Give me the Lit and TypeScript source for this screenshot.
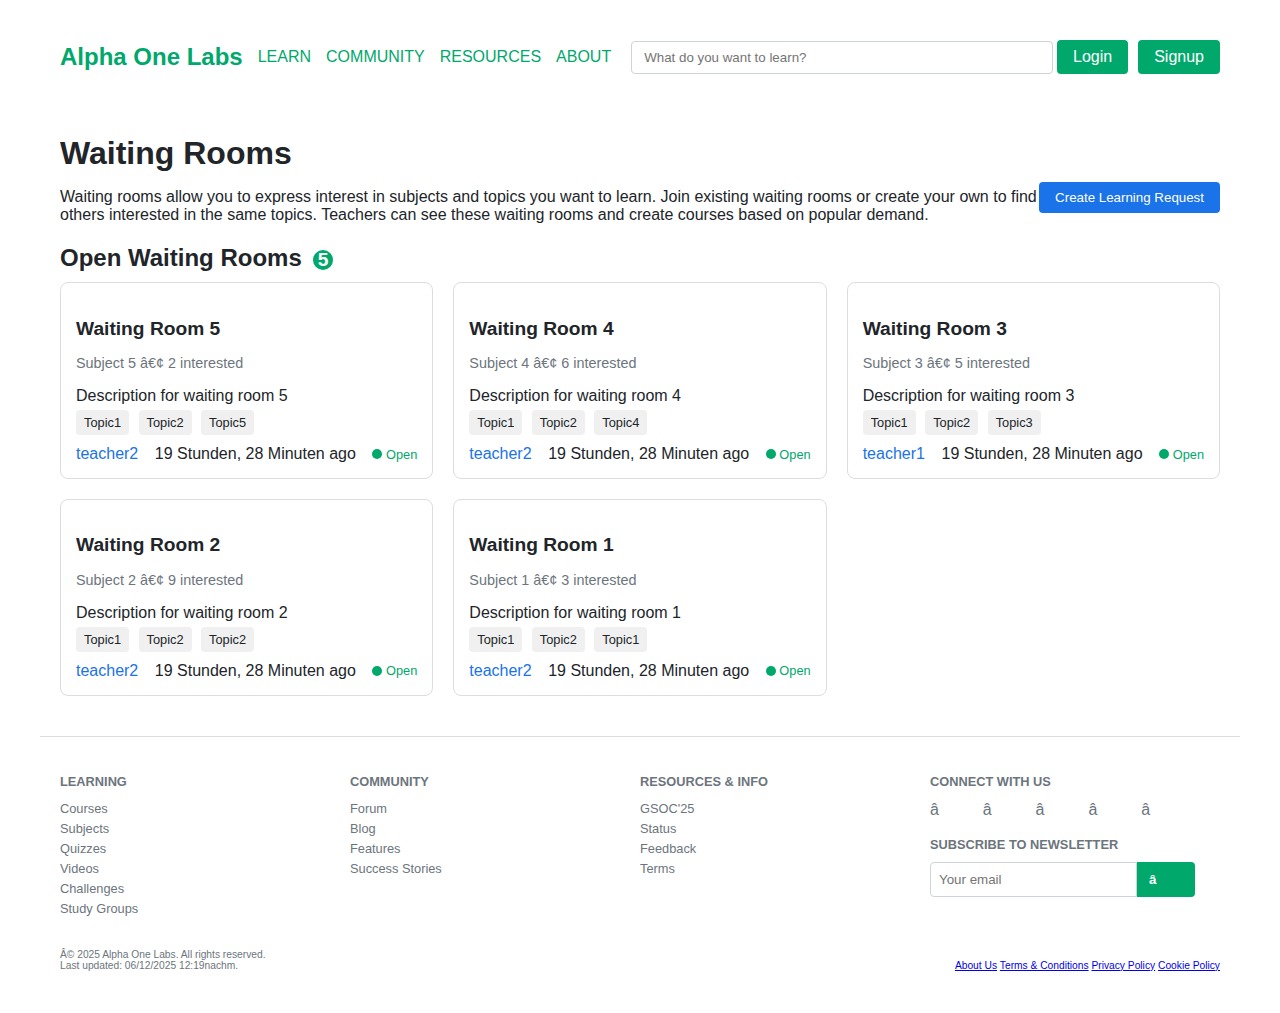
import { LitElement, html, css } from "lit";
import { customElement } from "lit/decorators.js";

const rooms = [
  { n: 5, interested: 2, topics: [1, 2, 5], teacher: "teacher2" },
  { n: 4, interested: 6, topics: [1, 2, 4], teacher: "teacher2" },
  { n: 3, interested: 5, topics: [1, 2, 3], teacher: "teacher1" },
  { n: 2, interested: 9, topics: [1, 2, 2], teacher: "teacher2" },
  { n: 1, interested: 3, topics: [1, 2, 1], teacher: "teacher2" },
];

const columns = [
  { title: "LEARNING", links: ["Courses", "Subjects", "Quizzes", "Videos", "Challenges", "Study Groups"] },
  { title: "COMMUNITY", links: ["Forum", "Blog", "Features", "Success Stories"] },
  { title: "RESOURCES & INFO", links: ["GSOC'25", "Status", "Feedback", "Terms"] },
];

@customElement("app-root")
export class AppRoot extends LitElement {
  static styles = css`
    :host { display: block; font-family: "Liberation Sans", Arial, sans-serif; font-size: 16px; line-height: 18px; color: #212529; }
    * { box-sizing: border-box; }
    h1, h2, h3, h4, p { margin: 0; }
    a { text-decoration: none; }
    .page { width: 1200px; margin: 0 auto; padding-top: 20px; height: 1013px; background: #fff; }
    .header { display: flex; align-items: center; padding: 20px; height: 74px; }
    .logo { font-size: 24px; line-height: 28px; font-weight: bold; color: #00a86b; margin-right: 15px; white-space: nowrap; }
    .nav { display: flex; gap: 15px; margin-right: 20px; }
    .nav a { color: #00a86b; }
    .search { flex: 1; min-width: 0; height: 33px; margin: 1px 4px 0 0; border: 1px solid #ced4da; border-radius: 4px; padding: 8px 12px; font: 13.333px "Liberation Sans", sans-serif; background: #fff; }
    input::placeholder { color: #757575; opacity: 1; }
    .btn { height: 34px; padding: 8px 16px; background: #00a86b; color: #fff; border-radius: 4px; }
    .btn + .btn { margin-left: 10px; }
    .main { padding: 41px 20px 0; }
    h1 { font-size: 32px; line-height: 37px; }
    .intro { display: flex; justify-content: space-between; margin-top: 10px; }
    .intro p { padding-top: 6px; white-space: nowrap; }
    .create { flex: none; height: 31px; padding: 8px 16px; border: 0; border-radius: 4px; background: #1a73e8; color: #fff; font: 13.333px/15px "Liberation Sans", sans-serif; }
    h2 { display: flex; align-items: flex-start; font-size: 24px; line-height: 28px; margin-top: 20px; }
    .count { display: block; width: 20px; height: 20px; margin: 6px 0 0 11.3px; border-radius: 50%; background: #00a86b; color: #fff; font-size: 19.2px; line-height: 20px; text-align: center; }
    .grid { display: grid; grid-template-columns: repeat(3, minmax(0, 1fr)); gap: 20px; margin-top: 10px; }
    .card { height: 196.8px; border: 1px solid #ddd; border-radius: 8px; padding: 34.6px 15px 0; }
    .card h3 { font-size: 19.2px; line-height: 22px; }
    .subject { margin-top: 15.4px; font-size: 14.4px; line-height: 16px; color: #6c757d; }
    .desc { margin-top: 16px; }
    .topics { display: flex; gap: 9.5px; margin-top: 5px; }
    .topic { padding: 5px 8px; background: #f0f0f0; border-radius: 4px; font-size: 12.8px; line-height: 15px; }
    .meta { display: flex; justify-content: space-between; align-items: center; margin-top: 10px; }
    .teacher { color: #1a73e8; }
    .open { display: flex; align-items: center; gap: 3.6px; color: #00a86b; font-size: 12.8px; line-height: 17px; padding: 0.6px 0 0.4px; }
    .dot { width: 10px; height: 10px; border-radius: 50%; background: #00a86b; }
    .footer { margin-top: 40px; border-top: 1px solid #ddd; padding: 36px 20px 0; color: #6c757d; }
    .cols { display: grid; grid-template-columns: repeat(4, 265px); column-gap: 25px; height: 176px; }
    h4 { font-size: 12.8px; line-height: 18px; }
    .links { display: flex; flex-direction: column; margin-top: 8px; }
    .links a { font-size: 12.8px; line-height: 20px; color: #6c757d; }
    .social { display: grid; grid-template-columns: repeat(5, 52.8px); margin: 10px 0 17px; }
    .news { display: flex; margin-top: 8px; }
    .email { width: 207px; height: 35px; border: 1px solid #ced4da; border-radius: 4px 0 0 4px; padding: 8px; font: 13.333px "Liberation Sans", sans-serif; }
    .send { width: 58px; height: 35px; border: 0; border-radius: 0 4px 4px 0; background: #00a86b; color: #fff; text-align: left; padding: 0 12px; font: bold 13.333px "Liberation Sans", sans-serif; }
    .legal { display: flex; justify-content: space-between; align-items: flex-end; font-size: 10.24px; line-height: 11px; }
    .policies { display: flex; gap: 2.85px; }
    .policies a { color: #0000ee; text-decoration: underline; }
  `;

  render() {
    return html`
      <div class="page">
        <header class="header">
          <a class="logo">Alpha One Labs</a>
          <nav class="nav">${["LEARN", "COMMUNITY", "RESOURCES", "ABOUT"].map((t) => html`<a>${t}</a>`)}</nav>
          <input class="search" placeholder="What do you want to learn?" />
          <a class="btn">Login</a><a class="btn">Signup</a>
        </header>
        <main class="main">
          <h1>Waiting Rooms</h1>
          <div class="intro">
            <p>Waiting rooms allow you to express interest in subjects and topics you want to learn. Join existing waiting rooms or create your own to find<br />others interested in the same topics. Teachers can see these waiting rooms and create courses based on popular demand.</p>
            <button class="create">Create Learning Request</button>
          </div>
          <h2>Open Waiting Rooms <span class="count">5</span></h2>
          <section class="grid">
            ${rooms.map((r) => html`
              <article class="card">
                <h3>Waiting Room ${r.n}</h3>
                <p class="subject">Subject ${r.n} â€¢ ${r.interested} interested</p>
                <p class="desc">Description for waiting room ${r.n}</p>
                <div class="topics">${r.topics.map((t) => html`<span class="topic">Topic${t}</span>`)}</div>
                <div class="meta">
                  <a class="teacher">${r.teacher}</a>
                  <span>19 Stunden, 28 Minuten ago</span>
                  <span class="open"><i class="dot"></i>Open</span>
                </div>
              </article>`)}
          </section>
        </main>
        <footer class="footer">
          <div class="cols">
            ${columns.map((c) => html`<div><h4>${c.title}</h4><div class="links">${c.links.map((l) => html`<a>${l}</a>`)}</div></div>`)}
            <div>
              <h4>CONNECT WITH US</h4>
              <div class="social">${[0, 1, 2, 3, 4].map(() => html`<a>â</a>`)}</div>
              <h4>SUBSCRIBE TO NEWSLETTER</h4>
              <div class="news"><input class="email" placeholder="Your email" /><button class="send">â</button></div>
            </div>
          </div>
          <div class="legal">
            <div>Â© 2025 Alpha One Labs. All rights reserved.<br />Last updated: 06/12/2025 12:19nachm.</div>
            <div class="policies">${["About Us", "Terms & Conditions", "Privacy Policy", "Cookie Policy"].map((t) => html`<a>${t}</a>`)}</div>
          </div>
        </footer>
      </div>`;
  }
}
